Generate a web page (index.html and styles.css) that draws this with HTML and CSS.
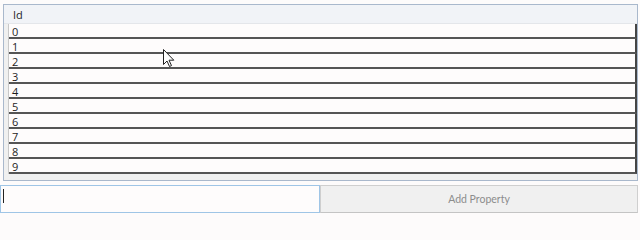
FILE: index.html
```html
<!DOCTYPE html>
<html lang="en">
<head>
    <meta charset="UTF-8">
    <title>Properties</title>
    <link rel="stylesheet" href="styles.css">
</head>
<body>
    <div class="grid">
        <div class="grid-inner">
            <div class="grid-header">Id</div>
            <div class="grid-row">0</div>
            <div class="grid-row">1</div>
            <div class="grid-row">2</div>
            <div class="grid-row">3</div>
            <div class="grid-row">4</div>
            <div class="grid-row">5</div>
            <div class="grid-row">6</div>
            <div class="grid-row">7</div>
            <div class="grid-row">8</div>
            <div class="grid-row">9</div>
        </div>
    </div>

    <!-- Add property bar -->
    <div class="add-bar">
        <div class="name-input"><span class="caret"></span></div>
        <button class="add-btn">Add Property</button>
    </div>

    <svg class="pointer" width="12" height="19" viewBox="0 0 12 19">
        <path d="M0.5 0.5 L0.5 15.5 L4 12 L6.5 17.5 L8.5 16.6 L6 11.2 L10.8 11.2 Z" fill="#fff" stroke="#222" stroke-width="1"/>
    </svg>
</body>
</html>
```

FILE: styles.css
```css
body {
    margin: 0;
    padding: 0;
    background: #fdfbfb;
    font-family: "Open Sans", "Noto Sans", sans-serif;
    font-size: 11px;
    color: #1e1e1e;
    width: 640px;
    height: 240px;
    position: relative;
    overflow: hidden;
}

/* Grid */
.grid {
    margin: 4px 2px 0 3px;
    border: 1px solid #a9b8cc;
    background: #f0f0f0;
    padding-bottom: 6px;
}

.grid-inner {
    border-left: 1px solid #c8c8c8;
    margin-left: 4px;
}

.grid-header {
    height: 18px;
    line-height: 19px;
    background: #f1f3f7;
    border-bottom: 1px solid #e4e6ea;
    margin-left: -5px;
    padding-left: 9px;
}

.grid-row {
    height: 13px;
    line-height: 15px;
    padding-left: 3px;
    background: #fefcfc;
    border-bottom: 2px solid #555;
    border-right: 2px solid #444;
}

/* Add property bar */
.add-bar {
    display: flex;
    margin-top: 4px;
    padding-right: 2px;
}

.name-input {
    width: 320px;
    height: 28px;
    border: 1px solid #9fc5e6;
    background: #fefcfc;
    padding: 3px 2px;
    box-sizing: border-box;
}

.caret {
    display: block;
    width: 1px;
    height: 14px;
    background: #222;
}

.add-btn {
    flex: 1;
    height: 28px;
    border: 1px solid #cfcfcf;
    border-bottom-color: #c4c4c4;
    background: #f0f0f0;
    color: #8c8c8c;
    font-family: "Lato", "Open Sans", sans-serif;
    font-size: 10.5px;
    padding: 0;
}

.pointer {
    position: absolute;
    left: 163px;
    top: 49px;
}
```
